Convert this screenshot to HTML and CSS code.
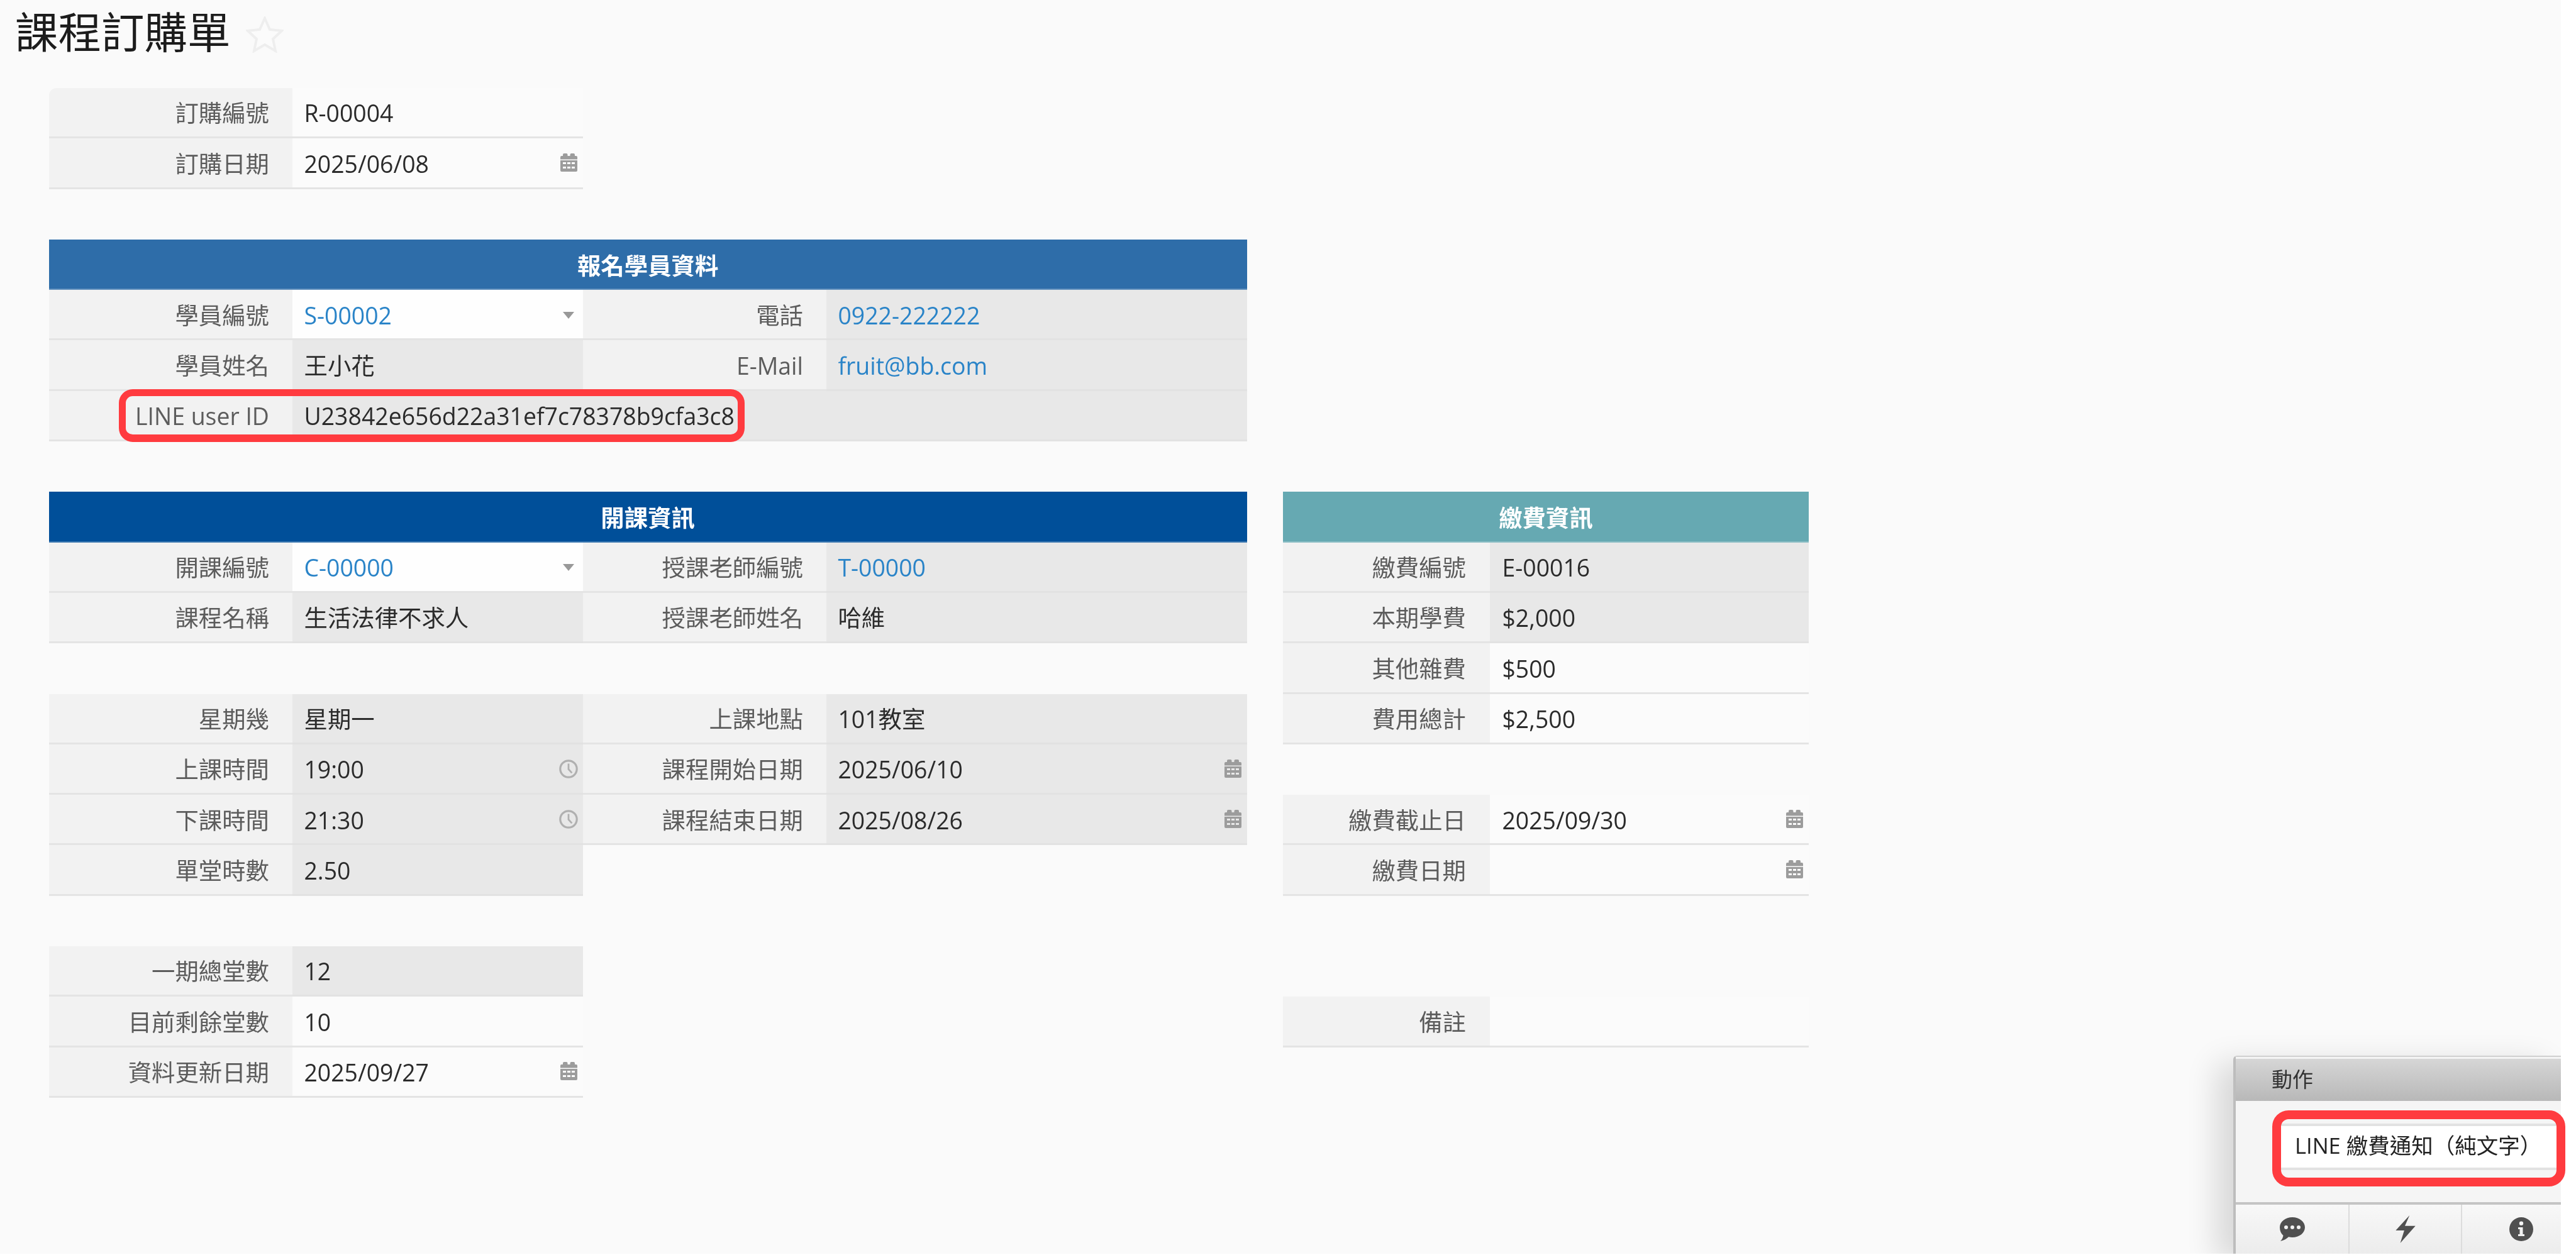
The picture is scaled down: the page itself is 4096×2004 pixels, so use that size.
FILE: index.html
```html
<!DOCTYPE html>
<html lang="zh-Hant">
<head>
<meta charset="utf-8">
<title>課程訂購單</title>
<link rel="stylesheet" href="styles.css">
</head>
<body>
<svg class="defs" width="0" height="0" aria-hidden="true">
  <symbol id="cal" viewBox="0 0 27 29">
    <path d="M6 0h3.500a2 2 0 0 1 2 2v2h4V2a2 2 0 0 1 2-2H21a2 2 0 0 1 2 2v2h2a2 2 0 0 1 2 2v3.500H0V6a2 2 0 0 1 2-2h2V2a2 2 0 0 1 2-2z"/>
    <path fill-rule="evenodd" d="M0 11h27v16a2 2 0 0 1-2 2H2a2 2 0 0 1-2-2zM4 14v3h5v-3zm7 0v3h5v-3zm7 0v3h5v-3zM4 21v3h5v-3zm7 0v3h5v-3zm7 0v3h5v-3z"/>
  </symbol>
  <symbol id="clock" viewBox="0 0 28 28">
    <circle cx="14" cy="14" r="12.300" fill="none" stroke="currentColor" stroke-width="3"/>
    <path d="M14 6v8.500l5 5.500" fill="none" stroke="currentColor" stroke-width="2.600"/>
  </symbol>
  <symbol id="caret" viewBox="0 0 18 11">
    <path d="M0 0h18l-9 11z"/>
  </symbol>
</svg>

<div class="page">
  <h1 class="title">
    <span>課程訂購單</span>
    <svg class="star" viewBox="0 0 60 58"><path d="M30 3l8 18 19 2-14 13 4 19-17-10-17 10 4-19L3 23l19-2z"/></svg>
  </h1>

  <div class="form">
    <div class="main">
      <section class="group">
        <div class="row"><div class="label first">訂購編號</div><div class="value">R-00004</div></div>
        <div class="row"><div class="label">訂購日期</div><div class="value">2025/06/08<svg class="ico cal"><use href="#cal"/></svg></div></div>
      </section>

      <section class="group">
        <div class="head blue">報名學員資料</div>
        <div class="row">
          <div class="label">學員編號</div><div class="value bright"><a class="link">S-00002</a><svg class="ico caret"><use href="#caret"/></svg></div>
          <div class="label">電話</div><div class="value ro"><a class="link">0922-222222</a></div>
        </div>
        <div class="row">
          <div class="label">學員姓名</div><div class="value ro">王小花</div>
          <div class="label">E-Mail</div><div class="value ro"><a class="link">fruit@bb.com</a></div>
        </div>
        <div class="row">
          <div class="label">LINE user ID</div><div class="value ro span3">U23842e656d22a31ef7c78378b9cfa3c8</div>
        </div>
      </section>

      <section class="group">
        <div class="head navy">開課資訊</div>
        <div class="row">
          <div class="label">開課編號</div><div class="value bright"><a class="link">C-00000</a><svg class="ico caret"><use href="#caret"/></svg></div>
          <div class="label">授課老師編號</div><div class="value ro"><a class="link">T-00000</a></div>
        </div>
        <div class="row">
          <div class="label">課程名稱</div><div class="value ro">生活法律不求人</div>
          <div class="label">授課老師姓名</div><div class="value ro">哈維</div>
        </div>
      </section>

      <section class="group">
        <div class="row">
          <div class="label">星期幾</div><div class="value ro">星期一</div>
          <div class="label">上課地點</div><div class="value ro">101教室</div>
        </div>
        <div class="row">
          <div class="label">上課時間</div><div class="value ro">19:00<svg class="ico clock"><use href="#clock"/></svg></div>
          <div class="label">課程開始日期</div><div class="value ro">2025/06/10<svg class="ico cal"><use href="#cal"/></svg></div>
        </div>
        <div class="row">
          <div class="label">下課時間</div><div class="value ro">21:30<svg class="ico clock"><use href="#clock"/></svg></div>
          <div class="label">課程結束日期</div><div class="value ro">2025/08/26<svg class="ico cal"><use href="#cal"/></svg></div>
        </div>
        <div class="row">
          <div class="label">單堂時數</div><div class="value ro">2.50</div>
        </div>
      </section>

      <section class="group">
        <div class="row"><div class="label">一期總堂數</div><div class="value ro">12</div></div>
        <div class="row"><div class="label">目前剩餘堂數</div><div class="value">10</div></div>
        <div class="row"><div class="label">資料更新日期</div><div class="value">2025/09/27<svg class="ico cal"><use href="#cal"/></svg></div></div>
      </section>
    </div>

    <div class="side">
      <section class="group">
        <div class="head teal">繳費資訊</div>
        <div class="row side-row"><div class="label">繳費編號</div><div class="value ro">E-00016</div></div>
        <div class="row side-row"><div class="label">本期學費</div><div class="value ro">$2,000</div></div>
        <div class="row side-row"><div class="label">其他雜費</div><div class="value">$500</div></div>
        <div class="row side-row"><div class="label">費用總計</div><div class="value">$2,500</div></div>
      </section>
      <section class="group">
        <div class="row side-row"><div class="label">繳費截止日</div><div class="value">2025/09/30<svg class="ico cal"><use href="#cal"/></svg></div></div>
        <div class="row side-row"><div class="label">繳費日期</div><div class="value"><svg class="ico cal"><use href="#cal"/></svg></div></div>
      </section>
      <section class="group wide-gap">
        <div class="row side-row"><div class="label">備註</div><div class="value"></div></div>
      </section>
    </div>
  </div>

  <aside class="panel">
    <div class="panel-head">動作</div>
    <div class="panel-body"><div class="action">LINE 繳費通知（純文字）</div></div>
    <div class="panel-foot">
      <div class="tool">
        <svg class="tool-ico" viewBox="0 0 40 38"><path fill-rule="evenodd" d="M20 0c11 0 20 7 20 16s-9 16-20 16c-2 0-4-.2-6-.7C11 34 7 37 1 38c2.500-2.500 4-5.500 4.500-9C2 26 0 21.500 0 16 0 7 9 0 20 0zM10 13a3 3 0 1 0 0 6 3 3 0 0 0 0-6zm10 0a3 3 0 1 0 0 6 3 3 0 0 0 0-6zm10 0a3 3 0 1 0 0 6 3 3 0 0 0 0-6z"/></svg>
      </div>
      <div class="tool">
        <svg class="tool-ico bolt" viewBox="0 0 30 42"><path d="M21 0L14 16h16L7 42l6-19H0z"/></svg>
      </div>
      <div class="tool">
        <svg class="tool-ico" viewBox="0 0 38 38"><path fill-rule="evenodd" d="M19 0a19 19 0 1 1 0 38 19 19 0 0 1 0-38zm0 6.500a3.200 3.200 0 1 0 0 6.400 3.200 3.200 0 0 0 0-6.400zM14 16v3h2.500v8H14v3h10v-3h-2.500V16z"/></svg>
      </div>
    </div>
  </aside>

  <div class="mark mark-id"></div>
  <div class="mark mark-action"></div>
</div>
</body>
</html>
```
FILE: styles.css
```css
* { box-sizing: border-box; }
html, body { margin: 0; padding: 0; background: #fff; }
body {
  width: 4096px;
  height: 2004px;
  overflow: hidden;
  font-family: "Open Sans", "Noto Sans CJK TC", sans-serif;
  font-size: 37.4px;
  color: #2b2b2b;
}
.defs { position: absolute; }
.page {
  position: relative;
  width: 4072px;
  height: 1994px;
  background: #fafafa;
  overflow: visible;
  filter: blur(0.7px);
}
.title {
  display: flex;
  align-items: center;
  gap: 24px;
  height: 140px;
  margin: 0;
  padding: 0 0 38px 24px;
  font-size: 68.5px;
  line-height: 102px;
  font-weight: 400;
  color: #1c1c1c;
}
.star { width: 60px; height: 58px; margin-top: 8px; fill: #fbfbfb; stroke: #eeeeee; stroke-width: 4; }

.form { display: flex; align-items: flex-start; padding-left: 77.7px; }
.main { width: 1904.9px; }
.side { width: 835.1px; margin-left: 57.9px; margin-top: 642.4px; }
.group + .group { margin-top: 80.3px; }
.group.wide-gap { margin-top: 160.6px; }

.head {
  height: 80.3px;
  padding-top: 3px;
  line-height: 78px;
  text-align: center;
  font-weight: 700;
  color: #fff;
  border-bottom: 2px solid rgba(255,255,255,.25);
}
.blue { background: #2e6da9; }
.navy { background: #004f99; }
.teal { background: #66a9b2; }

.row {
  display: grid;
  grid-template-columns: 387.3px 462.3px 386.7px 668.6px;
  height: 80.3px;
}
.side-row { grid-template-columns: 328.5px 506.6px; }

.label, .value {
  display: flex;
  align-items: center;
  height: 80.3px;
  padding-top: 3px;
  line-height: 1;
  white-space: nowrap;
  border-bottom: 3px solid #e4e4e4;
}
.label {
  justify-content: flex-end;
  padding-right: 37px;
  background: #f2f2f2;
  color: #5c5c5c;
}
.first { border-top-left-radius: 12px; }
.value {
  position: relative;
  padding-left: 18.5px;
  background: #fbfbfb;
  color: #2b2b2b;
}
.value.ro { background: #e8e8e8; border-bottom-color: #e2e2e2; }
.value.bright { background: #fefefe; }
.span3 { grid-column: 2 / span 3; }
.link { color: #2a84c8; }
.side-row .label { padding-right: 38px; }
.side-row .value { padding-left: 19.5px; }

.ico { position: absolute; top: 50%; }
.cal { right: 9px; width: 27px; height: 29px; margin-top: -15px; fill: #9c9c9c; }
.clock { right: 8px; width: 30px; height: 30px; margin-top: -15px; color: #b0b0b0; }
.caret { right: 14px; width: 18px; height: 11px; margin-top: -4px; fill: #999; }

.panel {
  position: absolute;
  left: 3551px;
  top: 1679px;
  width: 521px;
  height: 315px;
  display: flex;
  flex-direction: column;
  background: #f5f5f5;
  border-left: 4px solid #bdbdbd;
  border-top: 2px solid #d0d0d0;
  border-top-left-radius: 6px;
  box-shadow: -26px 12px 50px rgba(0,0,0,.14);
  clip-path: inset(-80px 0 0 -80px);
}
.panel-head {
  flex: none;
  height: 70px;
  padding-left: 57px;
  line-height: 66px;
  font-size: 33px;
  color: #333;
  border-top: 3px solid #f4f4f4;
  background: linear-gradient(#d6d6d6, #b8b8b8);
}
.panel-body { flex: 1; padding: 36px 0 0 60px; }
.action {
  height: 74px;
  padding-left: 34px;
  line-height: 62px;
  font-size: 34.5px;
  white-space: nowrap;
  color: #222;
  background: #fff;
  border-top: 4px solid #e2e2e2;
  border-bottom: 4px solid #e2e2e2;
}
.panel-foot {
  flex: none;
  display: grid;
  grid-template-columns: 181px 179px 157px;
  height: 82px;
  border-top: 4px solid #c4c4c4;
  background: linear-gradient(#f8f8f8, #ececec);
}
.tool { display: flex; align-items: center; justify-content: center; border-right: 2px solid #dcdcdc; }
.tool:last-child { border-right: 0; padding-left: 30px; }
.tool-ico { height: 38px; width: 40px; fill: #505050; }
.tool-ico.bolt { height: 44px; width: 32px; }

.mark { position: absolute; border: 12px solid #ff3b3f; pointer-events: none; }
.mark-id { left: 189px; top: 619px; width: 995px; height: 84px; border-width: 11px 11px 12px 11px; border-radius: 22px; }
.mark-action { left: 3613px; top: 1766px; width: 466px; height: 121px; border-width: 14px; border-radius: 26px; }
```
